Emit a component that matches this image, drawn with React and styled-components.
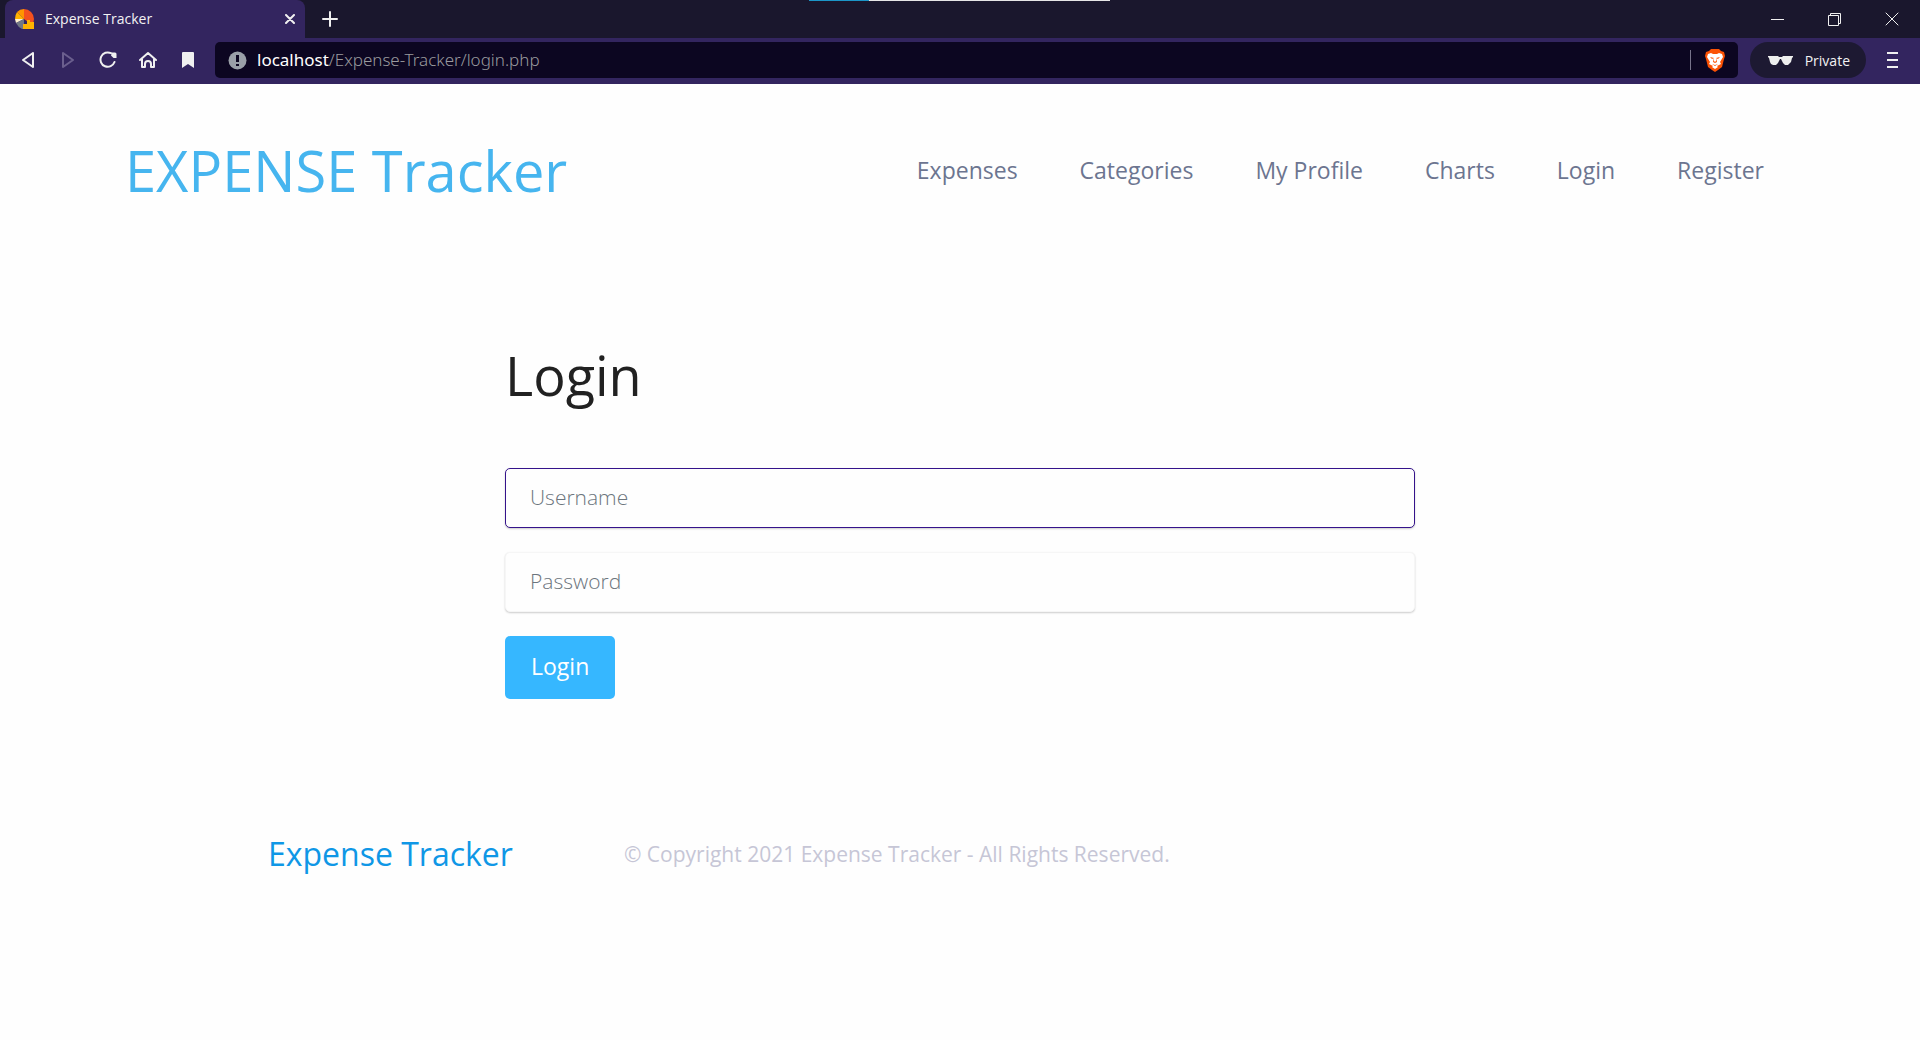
import React from "react";
import styled, { createGlobalStyle } from "styled-components";

const GlobalStyle = createGlobalStyle`
  *, *::before, *::after { box-sizing: border-box; }
  html, body, #root { min-height: 100vh; }
  body { margin: 0; background: #fefefe; color: #212529; font-family: "Open Sans", "Noto Sans", sans-serif; }
  button, input { font-family: inherit; }
  h1, p { margin: 0; }
  a { text-decoration: none; color: inherit; }
`;

const Chrome = styled.header`
  position: relative;
  color: #f2f2f2;
  background: #33255f;
`;

const TopProgress = styled.div`
  position: absolute;
  top: 0;
  left: 809px;
  width: 301px;
  height: 1px;
  background: linear-gradient(to right, #1c96c8 60px, #e6e6e6 60px);
`;

const TabBar = styled.div`
  display: flex;
  height: 38px;
  padding-left: 5px;
  background: #1a172d;
`;

const Tab = styled.div`
  display: flex;
  align-items: center;
  width: 300px;
  padding-left: 10px;
  border-radius: 8px 8px 0 0;
  background: #33255f;
  font-size: 14px;
  font-weight: 500;
`;

const TabTitle = styled.span`
  flex: 1;
  margin-left: 10px;
  padding-bottom: 2px;
`;

const IconButton = styled.button`
  display: grid;
  place-items: center;
  width: ${(p) => p.$width || 40}px;
  height: 38px;
  padding: 0;
  border: 0;
  background: none;
  color: ${(p) => (p.$dim ? "#6b5f8e" : "#f0f0f0")};
`;

const WindowControls = styled.div`
  display: flex;
  margin-left: auto;
`;

const Toolbar = styled.div`
  display: flex;
  align-items: center;
  height: 46px;
  padding: 0 2px 2px 8px;
`;

const AddressBar = styled.div`
  display: flex;
  flex: 1;
  align-items: center;
  height: 36px;
  margin: 0 12px 0 7px;
  padding: 0 13px;
  border-radius: 5px;
  background: #0c0621;
  font-size: 17px;
`;

const Address = styled.p`
  flex: 1;
  margin-left: 10px;
  color: #9a9a9e;
  font-family: "Noto Sans", sans-serif;
  font-weight: 300;
  line-height: 24px;

  b { color: #fff; font-weight: 400; }
`;

const Divider = styled.span`
  width: 1px;
  height: 20px;
  margin-right: 14px;
  background: #77738a;
`;

const PrivateBadge = styled.div`
  display: flex;
  align-items: center;
  gap: 12px;
  height: 36px;
  padding: 0 16px 0 18px;
  border-radius: 18px;
  background: #1d1932;
  font-size: 14px;
`;

const SiteHeader = styled.header`
  display: flex;
  align-items: center;
  justify-content: space-between;
  height: 172px;
  padding: 0 156px 0 125px;
`;

const SiteLogo = styled.a`
  && { color: #46b5ef; }
  font-size: 56px;
  line-height: 72px;
`;

const Nav = styled.nav`
  display: flex;
  gap: 62px;
`;

const NavLink = styled.a`
  && { color: #6c7590; }
  font-size: 23px;
  line-height: 32px;
`;

const Main = styled.main`
  max-width: 910px;
  margin: 0 auto;
  padding-top: 84px;
`;

const Title = styled.h1`
  color: #212121;
  font-size: 54px;
  font-weight: 400;
  line-height: 70px;
`;

const Form = styled.form`
  display: flex;
  flex-direction: column;
  align-items: flex-start;
  gap: 24px;
  padding-top: 58px;
`;

const Input = styled.input`
  display: block;
  width: 100%;
  height: 60px;
  padding: 0 24px 2px;
  border: 1px solid ${(p) => (p.$active ? "#35138b" : "#f6f6f6")};
  border-radius: 5px;
  outline: 0;
  background: #fefefe;
  box-shadow: 0 1px 2px rgba(0, 0, 0, 0.2);
  color: #212529;
  font-size: 21px;
  font-weight: 300;

  &::placeholder { color: #6c757d; opacity: 1; }
`;

const SubmitButton = styled.button`
  height: 63px;
  padding: 0 26px 4px;
  border: 0;
  border-radius: 5px;
  background: #36b7ff;
  color: #fff;
  font-size: 23px;
`;

const SiteFooter = styled.footer`
  display: flex;
  align-items: center;
  gap: 111px;
  padding: 131px 268px 0;
`;

const FooterLogo = styled.a`
  && { color: #0f97e6; }
  font-size: 32px;
  line-height: 48px;
`;

const Copyright = styled.p`
  color: #c6c6d6;
  font-size: 21px;
  line-height: 32px;
`;

const links = ["Expenses", "Categories", "My Profile", "Charts", "Login", "Register"];

const Favicon = () => (
  <svg width="20" height="22" viewBox="0 0 20 22" aria-hidden="true">
    <path d="M9 1a10 10 0 0 1 10 10q0 3-2 6L9 11z" fill="#f4511e" />
    <path d="M9 11 2 4A10 10 0 0 1 9 1" fill="#ff9500" />
    <path d="M9 11 0 11Q0 7 2 4z" fill="#ffb300" />
    <path d="m9 11-9 0 1 4z" fill="#fff1cf" />
    <path d="m9 11-8 4q2 4 6 6h2z" fill="#727784" />
    <path d="M8 16h4v-4h3v2h4v7H8z" fill="#ffb300" />
  </svg>
);

const Lion = () => (
  <svg width="20" height="23" viewBox="0 0 20 23" aria-hidden="true">
    <path d="m6 0-2 2-3 1-1 4 1 3 2 8 4 3 3 2 3-2 4-3 2-8 1-3-1-4-3-1-2-2z" fill="#fb5204" />
    <path d="m6 4-3 1-1 3 3 5-1 2 4 2-1 1 3 2 3-2-1-1 4-2-1-2 3-5-1-3-3-1-2 1H8z" fill="#fff" />
    <path d="m5 8 4 1-2 1zm10 0-4 1 2 1zM9 9l-1 4 2 1 2-1-1-4 0 3-1 1-1-1zM7 15l3 2 3-2-3 1z" fill="#fb5204" />
  </svg>
);

const Glasses = () => (
  <svg width="25" height="9" viewBox="0 0 25 9" aria-hidden="true">
    <path d="M0 0h10l1 1h3l1-1h10v1l-1 1-1 4-2 2-1 1h-3l-2-2-2-4h-1l-2 4-2 2H5L3 8 2 6 1 2 0 1z" fill="#eee" />
  </svg>
);

const Line = ({ d, w = 16, h = 16, stroke = 2 }) => (
  <svg width={w} height={h} viewBox={`0 0 ${w} ${h}`} fill="none" stroke="currentColor"
    strokeWidth={stroke} strokeLinejoin="round" strokeLinecap="round" aria-hidden="true">
    <path d={d} />
  </svg>
);

const Reload = () => (
  <svg width="18" height="18" viewBox="0 0 18 18" fill="none" aria-hidden="true">
    <path d="M12 2.200A7.200 7.200 0 1 0 15.500 11" stroke="currentColor" strokeWidth="2" strokeLinecap="round" />
    <path d="M13 1.500h3q1.500 0 1.500 1.500v4h-3l-2.500-2.500z" fill="currentColor" />
  </svg>
);

export default function App() {
  return (
    <>
      <GlobalStyle />
      <Chrome>
        <TabBar>
          <Tab>
            <Favicon />
            <TabTitle>Expense Tracker</TabTitle>
            <IconButton $width={30} aria-label="Close tab"><Line w={10} h={10} d="m1 1 8 8M9 1 1 9" /></IconButton>
          </Tab>
          <IconButton $width={50} aria-label="New tab"><Line d="M8 1v14M1 8h14" /></IconButton>
          <WindowControls>
            <IconButton $width={57} aria-label="Minimize">
              <svg width="14" height="3" aria-hidden="true"><rect y="1" width="13" height="1" fill="currentColor" /></svg>
            </IconButton>
            <IconButton $width={57} aria-label="Restore">
              <svg width="13" height="13" fill="none" stroke="currentColor" aria-hidden="true"><path d="M.5 2.5h10v10H.5zM2.500 2.500v-2h10v10h-2" /></svg>
            </IconButton>
            <IconButton $width={57} aria-label="Close"><Line w={14} h={14} stroke={1} d="m1 1 12 12M13 1 1 13" /></IconButton>
          </WindowControls>
        </TabBar>
        <Toolbar>
          <IconButton aria-label="Back"><Line w={12} d="M11 1v14L1 8z" /></IconButton>
          <IconButton $dim aria-label="Forward"><Line w={12} d="M1 1v14l10-7z" /></IconButton>
          <IconButton aria-label="Reload"><Reload /></IconButton>
          <IconButton aria-label="Home"><Line w={18} h={18} d="m1 9 8-7 8 7M3 8v8h3v-3a3 3 0 0 1 6 0v3h3V8" /></IconButton>
          <IconButton aria-label="Bookmark">
            <svg width="12" height="16" aria-hidden="true"><path d="M1 0h10q1 0 1 1v15l-6-4-6 4V1q0-1 1-1" fill="currentColor" /></svg>
          </IconButton>
          <AddressBar>
            <svg width="19" height="19" aria-hidden="true">
              <circle cx="9.500" cy="9.500" r="9" fill="#9aa0a8" />
              <path d="M8 4h3v7H8zm0 9h3v2H8z" fill="#0c0621" />
            </svg>
            <Address><b>localhost</b>/Expense-Tracker/login.php</Address>
            <Divider />
            <Lion />
          </AddressBar>
          <PrivateBadge><Glasses />Private</PrivateBadge>
          <IconButton $width={52} aria-label="Menu">
            <svg width="11" height="16" aria-hidden="true"><path d="M0 0h11v2H0zm0 7h11v2H0zm0 7h11v2H0z" fill="currentColor" /></svg>
          </IconButton>
        </Toolbar>
        <TopProgress />
      </Chrome>
      <SiteHeader>
        <SiteLogo href="#">EXPENSE Tracker</SiteLogo>
        <Nav>{links.map((name) => <NavLink key={name} href="#">{name}</NavLink>)}</Nav>
      </SiteHeader>
      <Main>
        <Title>Login</Title>
        <Form onSubmit={(e) => e.preventDefault()}>
          <Input $active type="text" placeholder="Username" aria-label="Username" />
          <Input type="password" placeholder="Password" aria-label="Password" />
          <SubmitButton>Login</SubmitButton>
        </Form>
      </Main>
      <SiteFooter>
        <FooterLogo href="#">Expense Tracker</FooterLogo>
        <Copyright>© Copyright 2021 Expense Tracker - All Rights Reserved.</Copyright>
      </SiteFooter>
    </>
  );
}
